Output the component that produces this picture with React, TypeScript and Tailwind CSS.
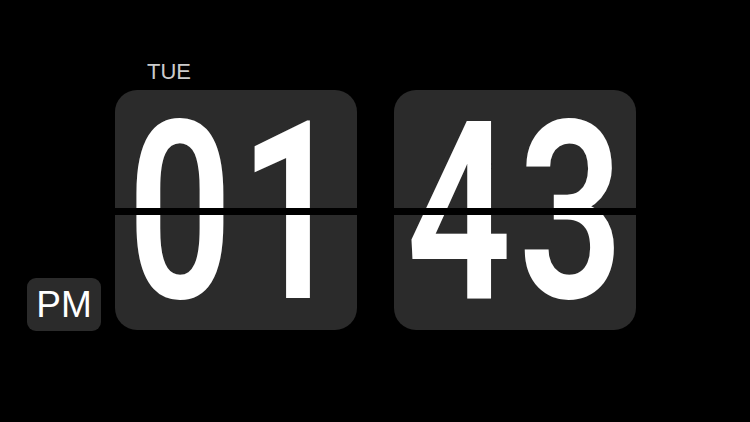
import React from "react";

function Digit({ d }: { d: string }) {
  return (
    <div className="w-[112px] h-full flex items-center justify-center">
      <span
        className="block text-white text-[248px] leading-[0.9] font-semibold scale-x-[0.74] translate-y-[4px]"
        style={{ fontFamily: "Roboto, 'Liberation Sans', sans-serif" }}
      >
        {d}
      </span>
    </div>
  );
}

function Card({ digits }: { digits: string }) {
  return (
    <div className="relative w-[242px] h-[240px] rounded-[22px] bg-[#2b2b2b] flex justify-center">
      {digits.split("").map((d, i) => (
        <Digit key={i} d={d} />
      ))}
      <div className="absolute left-0 right-0 top-[118px] h-[7px] bg-black" />
    </div>
  );
}

export default function App() {
  return (
    <div
      className="w-full h-[422px] bg-black pl-[27px] pt-[61px] overflow-hidden"
      style={{ fontFamily: "'Liberation Sans', Arial, sans-serif" }}
    >
      <div className="flex items-end">
        <div className="w-[74px] h-[53px] mb-[-1px] rounded-[9px] bg-[#2b2b2b] flex items-center justify-center text-white text-[37px] leading-none">
          PM
        </div>
        <div className="ml-[14px] flex flex-col">
          <div className="pl-[32px] h-[22px] leading-[22px] text-[22px] text-[#cccccc] mb-[7px]">
            TUE
          </div>
          <div className="flex gap-[37px]">
            <Card digits="01" />
            <Card digits="43" />
          </div>
        </div>
      </div>
    </div>
  );
}
